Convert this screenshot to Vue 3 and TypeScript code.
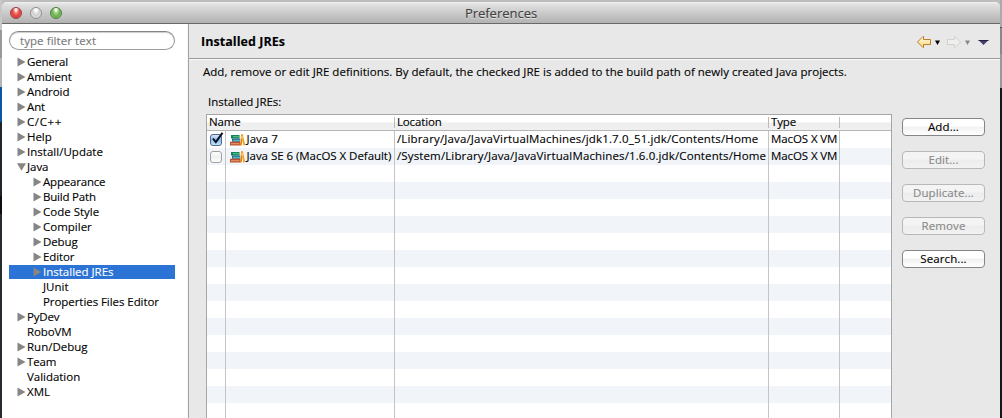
<script setup lang="ts">
interface TreeNode {
  label: string
  state: 'closed' | 'open' | 'leaf'
  depth?: number
  selected?: boolean
  spacing: number
}

interface Jre {
  name: string
  location: string
  type: string
  checked: boolean
  spacing: [number, number]
}

const nodes: TreeNode[] = [
  { label: 'General', state: 'closed', spacing: -0.2 },
  { label: 'Ambient', state: 'closed', spacing: -0.12 },
  { label: 'Android', state: 'closed', spacing: -0.08 },
  { label: 'Ant', state: 'closed', spacing: -0.1 },
  { label: 'C/C++', state: 'closed', spacing: 0.6 },
  { label: 'Help', state: 'closed', spacing: -0.05 },
  { label: 'Install/Update', state: 'closed', spacing: 0.02 },
  { label: 'Java', state: 'open', spacing: -0.05 },
  { label: 'Appearance', state: 'closed', depth: 1, spacing: -0.2 },
  { label: 'Build Path', state: 'closed', depth: 1, spacing: -0.2 },
  { label: 'Code Style', state: 'closed', depth: 1, spacing: 0 },
  { label: 'Compiler', state: 'closed', depth: 1, spacing: 0 },
  { label: 'Debug', state: 'closed', depth: 1, spacing: -0.1 },
  { label: 'Editor', state: 'closed', depth: 1, spacing: -0.13 },
  { label: 'Installed JREs', state: 'closed', depth: 1, selected: true, spacing: 0 },
  { label: 'JUnit', state: 'leaf', depth: 1, spacing: 0 },
  { label: 'Properties Files Editor', state: 'leaf', depth: 1, spacing: -0.06 },
  { label: 'PyDev', state: 'closed', spacing: -0.2 },
  { label: 'RoboVM', state: 'leaf', spacing: -0.13 },
  { label: 'Run/Debug', state: 'closed', spacing: 0 },
  { label: 'Team', state: 'closed', spacing: -0.15 },
  { label: 'Validation', state: 'leaf', spacing: -0.03 },
  { label: 'XML', state: 'closed', spacing: 0 },
]

const jres: Jre[] = [
  { name: 'Java 7', location: '/Library/Java/JavaVirtualMachines/jdk1.7.0_51.jdk/Contents/Home', type: 'MacOS X VM', checked: true, spacing: [0.05, 0.15] },
  { name: 'Java SE 6 (MacOS X Default)', location: '/System/Library/Java/JavaVirtualMachines/1.6.0.jdk/Contents/Home', type: 'MacOS X VM', checked: false, spacing: [-0.04, 0.13] },
]

const emptyRows = 15

const actions = [
  { label: 'Add...', enabled: true },
  { label: 'Edit...', enabled: false },
  { label: 'Duplicate...', enabled: false },
  { label: 'Remove', enabled: false },
  { label: 'Search...', enabled: true },
]
</script>

<template>
  <div class="desktop">
    <div class="window">
      <header class="titlebar">
        <div class="lights">
          <i class="light red"></i><i class="light gray"></i><i class="light green"></i>
        </div>
        <span class="window-title">Preferences</span>
      </header>
      <div class="body">
        <aside class="sidebar">
          <div class="filter"><span>type filter text</span></div>
          <ul class="tree">
            <li v-for="n in nodes" :key="n.label" class="node" :class="{ child: n.depth === 1, selected: n.selected }">
              <svg class="arrow" viewBox="0 0 9 10" width="9" height="10">
                <path v-if="n.state === 'closed'" d="M.5 .5 8.500 5 .5 9.500z" />
                <path v-else-if="n.state === 'open'" d="M0 1.2h9L4.5 8.8z" />
              </svg>
              <span :style="{ letterSpacing: n.spacing + 'px' }">{{ n.label }}</span>
            </li>
          </ul>
        </aside>
        <main class="main">
          <div class="page-head">
            <h1>Installed JREs</h1>
            <svg class="nav" width="74" height="14" viewBox="0 0 74 14">
              <defs>
                <linearGradient id="gold" x1="0" y1="0" x2="0" y2="1">
                  <stop offset="0" stop-color="#fffdf0" />
                  <stop offset="1" stop-color="#fbd673" />
                </linearGradient>
              </defs>
              <path d="M1.500 7 7 1.500H7.500V4.500H14.500V9.500H7.500V12.500H7z" fill="url(#gold)" stroke="#bd7d20" />
              <path d="M19 5.500h5l-2.500 4.500z" fill="#000" />
              <path d="M44.500 7 39 1.500H38.500V4.500H31.500V9.500H38.500V12.500H39z" fill="#eff0ed" stroke="#d0d2cd" />
              <path d="M49 5.500h5l-2.500 4.500z" fill="#888" />
              <path d="M62.500 5h10l-5 5z" fill="#443c70" />
              <path d="M62.500 5.500h10" stroke="#25213d" />
            </svg>
          </div>
          <p class="description">Add, remove or edit JRE definitions. By default, the checked JRE is added to the build path of newly created Java projects.</p>
          <div class="caption">Installed JREs:</div>
          <div class="content">
            <div class="table">
              <div class="thead">
                <span class="th">Name</span><span class="th">Location</span><span class="th">Type</span><span class="th"></span>
              </div>
              <div v-for="j in jres" :key="j.name" class="tr">
                <span class="td check">
                  <svg width="16" height="16" viewBox="0 0 16 16">
                    <defs>
                      <linearGradient id="boxOn" x1="0" y1="0" x2="0" y2="1">
                        <stop offset="0" stop-color="#dceafa" /><stop offset=".5" stop-color="#8fbbea" /><stop offset="1" stop-color="#c5ecff" />
                      </linearGradient>
                      <linearGradient id="boxOff" x1="0" y1="0" x2="0" y2="1">
                        <stop offset="0" stop-color="#fff" /><stop offset=".5" stop-color="#f0f0f0" /><stop offset="1" stop-color="#fff" />
                      </linearGradient>
                    </defs>
                    <rect x="1.500" y="2.500" width="11" height="11" rx="2.500" :fill="j.checked ? 'url(#boxOn)' : 'url(#boxOff)'" :stroke="j.checked ? '#53678c' : '#a0a0a0'" />
                    <path v-if="j.checked" d="M4 6.500 6.800 10 13.500 .8" fill="none" stroke="#0b1020" stroke-width="2" />
                  </svg>
                </span>
                <span class="td name">
                  <svg width="16" height="14" viewBox="0 0 16 14">
                    <path d="M1 2h8.500v3.500H1z" fill="#12845b" /><path d="M3 3.300h7v1H3z" fill="#62c88a" />
                    <path d="M2 5.500h8v3.300H2z" fill="#176b91" /><path d="M3 6.700h7v1H3z" fill="#77c6ce" />
                    <path d="M0 8.800h10v3.700H0z" fill="#b9512c" /><path d="M1 10.300h8.500v1H1z" fill="#efa36c" />
                    <path d="M12 1.500 10.800 12.500" stroke="#df8515" stroke-width="1.800" />
                    <path d="M12 1.500 14.300 12.300" stroke="#efa12b" stroke-width="1.800" />
                    <path d="M12 3v3" stroke="#ffe090" />
                  </svg>
                  <span class="text" :style="{ letterSpacing: j.spacing[0] + 'px' }">{{ j.name }}</span>
                </span>
                <span class="td"><span class="text" :style="{ letterSpacing: j.spacing[1] + 'px' }">{{ j.location }}</span></span>
                <span class="td type"><span class="text">{{ j.type }}</span></span>
                <span class="td"></span>
              </div>
              <div v-for="r in emptyRows" :key="r" class="tr">
                <span v-for="c in 5" :key="c" class="td"></span>
              </div>
            </div>
            <div class="actions">
              <button v-for="a in actions" :key="a.label" :disabled="!a.enabled">{{ a.label }}</button>
            </div>
          </div>
        </main>
      </div>
    </div>
  </div>
</template>

<style>
body { overflow: hidden; }
</style>

<style scoped>
* { box-sizing: border-box; }
.desktop {
  width: 1002px; height: 418px; padding: 2px 2px 0; overflow: hidden;
  font-family: "Lucida Grande", "Open Sans", "Noto Sans", sans-serif; font-size: 11.5px; line-height: 15px; color: #000;
  -webkit-text-stroke: .12px;
  background:
    linear-gradient(#aaa 0 27px, #555 27px 28px, #888 28px 54px, #999 54px 88px, #10191c 88px) right / 2px 100% no-repeat,
    linear-gradient(#c8c8c8 0 30px, #999 30px 58px, #b4b4b4 58px 87px, #0a56a5 87px 122px, #20252b 122px 196px, #0b0f13 196px 214px, #252b30 214px) left / 2px 100% no-repeat,
    #bdbdbd;
}
.window { height: 416px; background: #e8e8e8; border-radius: 5px 5px 0 0; overflow: hidden; display: flex; flex-direction: column; }
.titlebar {
  height: 22px; flex: none; display: grid; grid-template-columns: 1fr auto 1fr; align-items: center;
  background: linear-gradient(#f0f0f0, #dedede 3px, #b2b2b2); border-bottom: 1px solid #686868;
}
.lights { display: flex; gap: 8px; padding-left: 8px; }
.light { width: 12px; height: 12px; border-radius: 50%; border: 1px solid; }
.red { background: radial-gradient(ellipse at 50% 15%, #fff0ee 0 10%, #f1716a 35%, #e03a34 60%, #ff8c83); border-color: #96403d; }
.gray { background: radial-gradient(ellipse at 50% 15%, #fff 0 10%, #cfcfcf 50%, #ededed); border-color: #8f8f8f; }
.green { background: radial-gradient(ellipse at 50% 15%, #f4ffec 0 10%, #9acb80 35%, #67ad4b 60%, #b4ed91); border-color: #4e7a42; }
.window-title { font-size: 13px; color: #404040; letter-spacing: -.02px; padding-top: 1px; text-shadow: 0 1px 0 #e4e4e4; }
.body { flex: 1; display: flex; min-height: 0; }
.sidebar { width: 187px; flex: none; background: #fff; border-right: 1px solid #a2a2a2; box-shadow: inset -1px 0 #f7f7f7; padding: 7px 13px 0 7px; }
.filter { height: 19px; border: 1px solid #9c9c9c; border-top-color: #858585; border-radius: 10px; box-shadow: inset 0 1px 1px #ccc; padding-left: 10px; line-height: 17px; color: #777; letter-spacing: .07px; }
.tree { list-style: none; margin: 5px 0 0; padding: 0; }
.node { height: 15px; display: flex; align-items: center; padding-left: 8px; white-space: nowrap; }
.node span, .text { padding-bottom: 2px; }
.node.child { padding-left: 24px; }
.node.selected { color: #fff; background: linear-gradient(#2b73d5 14px, transparent 14px); }
.arrow { fill: #868686; margin: 0 1px 1px 0; flex: none; }
.main { flex: 1; min-width: 0; display: flex; flex-direction: column; }
.page-head { height: 35px; flex: none; border-bottom: 1px solid #9b9b9b; box-shadow: 0 1px #f8f8f8; display: flex; align-items: center; justify-content: space-between; padding: 0 10px 0 12px; }
.nav { margin-top: 1px; }
h1 { margin: 0; font-size: 12.5px; font-weight: 700; letter-spacing: .05px; }
.description { margin: 5px 0 0 14px; height: 15px; white-space: nowrap; letter-spacing: .02px; }
.caption { margin: 15px 0 0 19px; height: 15px; letter-spacing: -.02px; }
.content { display: flex; gap: 10px; margin: 5px 0 0 17px; }
.table { width: 686px; border: 1px solid #a6a6a6; border-bottom: 0; background: #fff; }
.thead { height: 16px; display: grid; grid-template-columns: 188px 374px 71px 1fr; align-items: center; background: linear-gradient(#fff 0 45%, #eee 55%, #f0f0f0); border-bottom: 1px solid #b4b4b4; letter-spacing: -.15px; }
.th { height: 11px; line-height: 10px; padding-left: 2px; border-right: 1px solid #bbb; }
.th:last-child { border: 0; }
.tr { height: 17px; display: grid; grid-template-columns: 19px 169px 374px 71px 1fr; white-space: nowrap; }
.tr:nth-child(odd) { background: #f1f5fa; }
.td { border-right: 1px solid #c4c4c4; display: flex; align-items: center; padding-left: 2px; min-width: 0; }
.td:last-child { border: 0; }
.name { padding-left: 4px; }
.name svg { flex: none; margin-right: .5px; }
.type { letter-spacing: -.1px; }
.check svg { flex: none; }
.actions { display: flex; flex-direction: column; gap: 15px; padding-top: 4px; }
button { width: 83px; height: 18px; padding: 0 0 1px; font: inherit; letter-spacing: .1px; line-height: 15px; border: 1px solid #858585; border-radius: 4px; color: #000; background: linear-gradient(#fff 0 45%, #f1f1f1 50%, #fff); }
button:disabled { color: #888; border-color: #b8b8b8; background: linear-gradient(#f4f4f4 0 45%, #ececec 50%, #f2f2f2); }
</style>
